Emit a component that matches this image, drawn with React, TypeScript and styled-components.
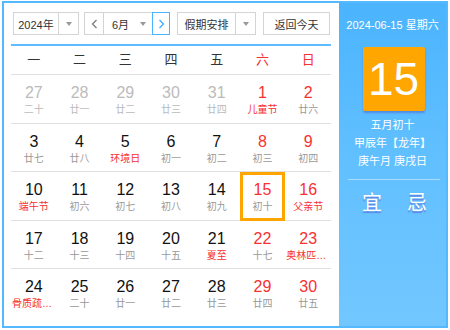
import React from 'react';
import styled, { createGlobalStyle } from 'styled-components';

type Day = {
  num: number;
  lunar: string;
  festival?: boolean;
  other?: boolean;
  selected?: boolean;
};

const WEEKDAYS = ['一', '二', '三', '四', '五', '六', '日'];

const WEEKS: Day[][] = [
  [
    { num: 27, lunar: '二十', other: true },
    { num: 28, lunar: '廿一', other: true },
    { num: 29, lunar: '廿二', other: true },
    { num: 30, lunar: '廿三', other: true },
    { num: 31, lunar: '廿四', other: true },
    { num: 1, lunar: '儿童节', festival: true },
    { num: 2, lunar: '廿六' },
  ],
  [
    { num: 3, lunar: '廿七' },
    { num: 4, lunar: '廿八' },
    { num: 5, lunar: '环境日', festival: true },
    { num: 6, lunar: '初一' },
    { num: 7, lunar: '初二' },
    { num: 8, lunar: '初三' },
    { num: 9, lunar: '初四' },
  ],
  [
    { num: 10, lunar: '端午节', festival: true },
    { num: 11, lunar: '初六' },
    { num: 12, lunar: '初七' },
    { num: 13, lunar: '初八' },
    { num: 14, lunar: '初九' },
    { num: 15, lunar: '初十', selected: true },
    { num: 16, lunar: '父亲节', festival: true },
  ],
  [
    { num: 17, lunar: '十二' },
    { num: 18, lunar: '十三' },
    { num: 19, lunar: '十四' },
    { num: 20, lunar: '十五' },
    { num: 21, lunar: '夏至', festival: true },
    { num: 22, lunar: '十七' },
    { num: 23, lunar: '奥林匹克日', festival: true },
  ],
  [
    { num: 24, lunar: '骨质疏松日', festival: true },
    { num: 25, lunar: '二十' },
    { num: 26, lunar: '廿一' },
    { num: 27, lunar: '廿二' },
    { num: 28, lunar: '廿三' },
    { num: 29, lunar: '廿四' },
    { num: 30, lunar: '廿五' },
  ],
];

const RED = '#f73131';
const LINE = '#d4d4d4';

const GlobalStyle = createGlobalStyle`
  body {
    margin: 0;
    background: #fff;
    font-family: "Liberation Sans", Arial, "Noto Sans CJK SC", sans-serif;
  }
`;

const Widget = styled.div`
  display: flex;
  width: 442px;
  height: 323px;
  margin: 1px 0 0 2px;
  border: 2px solid #55b9ff;
`;

const MainPanel = styled.div`
  width: 335px;
  box-sizing: border-box;
  padding: 9px 8px 0 7px;
  background: #fff;
`;

const Toolbar = styled.div`
  display: flex;
  height: 23px;
  margin: 0 1px 9px 2px;
`;

const SelectBox = styled.div<{ width: number; gap?: number }>`
  display: flex;
  width: ${(p) => p.width}px;
  height: 23px;
  box-sizing: border-box;
  margin-right: ${(p) => p.gap || 0}px;
  border: 1px solid ${LINE};
  background: #fff;
  font-size: 11px;
  color: #333;
`;

const SelectLabel = styled.div<{ align?: string; pad?: number }>`
  flex: 1;
  display: flex;
  align-items: center;
  justify-content: ${(p) => p.align || 'center'};
  padding-left: ${(p) => p.pad || 0}px;
`;

const ArrowCell = styled.div<{ divided?: boolean }>`
  width: 19px;
  display: flex;
  align-items: center;
  justify-content: center;
  border-left: ${(p) => (p.divided ? `1px solid ${LINE}` : 'none')};
`;

const Caret = styled.span`
  width: 0;
  height: 0;
  border-left: 3px solid transparent;
  border-right: 3px solid transparent;
  border-top: 4px solid #999;
`;

const MonthGroup = styled.div`
  display: flex;
  width: 86px;
  height: 23px;
  margin-right: 7px;
  font-size: 11px;
  color: #333;
`;

const NavButton = styled.div<{ active?: boolean; width: number }>`
  width: ${(p) => p.width}px;
  box-sizing: border-box;
  display: flex;
  align-items: center;
  justify-content: center;
  border: 1px solid ${(p) => (p.active ? '#4ab4ff' : LINE)};
  color: ${(p) => (p.active ? '#3aa6ff' : '#777')};
  background: #fff;
`;

const MonthLabel = styled.div`
  flex: 1;
  display: flex;
  align-items: center;
  box-sizing: border-box;
  padding-left: 8px;
  border-top: 1px solid ${LINE};
  border-bottom: 1px solid ${LINE};
  background: #fff;
`;

const MonthText = styled.span`
  flex: 1;
`;

const TodayButton = styled.div`
  width: 67px;
  height: 23px;
  box-sizing: border-box;
  display: flex;
  align-items: center;
  justify-content: center;
  border: 1px solid ${LINE};
  font-size: 11px;
  color: #333;
  background: #fff;
`;

const WeekHeader = styled.div`
  display: grid;
  grid-template-columns: repeat(7, 1fr);
  height: 28px;
  border-top: 2px solid #5cbcff;
  border-bottom: 1px solid #e0e0e0;
`;

const WeekdayName = styled.div<{ weekend: boolean }>`
  font-size: 13px;
  line-height: 28px;
  text-align: center;
  color: ${(p) => (p.weekend ? RED : '#333')};
`;

const WeekRow = styled.div<{ last: boolean }>`
  display: grid;
  grid-template-columns: repeat(7, 1fr);
  height: 47.5px;
  border-bottom: ${(p) => (p.last ? 'none' : '1px solid #e0e0e0')};
`;

const DayCell = styled.div<{ selected?: boolean }>`
  position: relative;
  min-width: 0;
  padding-top: 9px;
  text-align: center;

  &::after {
    content: '';
    display: ${(p) => (p.selected ? 'block' : 'none')};
    position: absolute;
    top: 0;
    left: 0;
    right: 0;
    bottom: -1px;
    border: 3px solid #ffa500;
  }
`;

const DayNum = styled.div<{ color: string }>`
  font-size: 16px;
  line-height: 18px;
  color: ${(p) => p.color};
`;

const LunarText = styled.div<{ color: string }>`
  font-size: 10px;
  line-height: 16px;
  color: ${(p) => p.color};
  white-space: nowrap;
  overflow: hidden;
  text-overflow: ellipsis;
  padding: 0 1px;
`;

const SidePanel = styled.div`
  width: 107px;
  display: flex;
  flex-direction: column;
  align-items: center;
  padding-top: 14px;
  box-sizing: border-box;
  background: linear-gradient(180deg, #4bb4fd 0%, #62c0ff 50%, #72c7ff 100%);
  color: #fff;
`;

const DateLine = styled.div`
  font-size: 11px;
  line-height: 16px;
  white-space: nowrap;
`;

const BigDay = styled.div`
  width: 62px;
  height: 64px;
  margin: 14px 0 5px 2px;
  background: #ffa600;
  border-radius: 2px;
  box-shadow: 0 2px 2px rgba(70, 80, 200, 0.45);
  font-size: 46px;
  line-height: 64px;
  text-align: center;
  color: #fff;
`;

const LunarLine = styled.div`
  font-size: 11px;
  line-height: 18px;
  white-space: nowrap;
`;

const Divider = styled.div`
  width: 92px;
  height: 1px;
  margin: 9px 0 11px 3px;
  background: rgba(255, 255, 255, 0.45);
`;

const AdviceRow = styled.div`
  display: flex;
  gap: 25px;
  padding-left: 4px;
`;

const Advice = styled.span`
  font-size: 20px;
  line-height: 24px;
  text-shadow: 0 2px 1px rgba(90, 80, 210, 0.55);
`;

const Chevron = ({ dir }: { dir: 'left' | 'right' }) => (
  <svg width="7" height="10" viewBox="0 0 7 10">
    <polyline
      points={dir === 'left' ? '5.5,1 1.5,5 5.5,9' : '1.5,1 5.5,5 1.5,9'}
      fill="none"
      stroke="currentColor"
      strokeWidth="1.2"
    />
  </svg>
);

const numColor = (d: Day, col: number) => {
  if (d.other) return '#bbb';
  return col >= 5 ? RED : '#111';
};

const lunarColor = (d: Day) => {
  if (d.other) return '#bbb';
  return d.festival ? RED : '#999';
};

const App: React.FC = () => (
  <>
    <GlobalStyle />
    <Widget>
      <MainPanel>
        <Toolbar>
          <SelectBox width={66} gap={5}>
            <SelectLabel>2024年</SelectLabel>
            <ArrowCell divided>
              <Caret />
            </ArrowCell>
          </SelectBox>
          <MonthGroup>
            <NavButton width={20}>
              <Chevron dir="left" />
            </NavButton>
            <MonthLabel>
              <MonthText>6月</MonthText>
              <ArrowCell>
                <Caret />
              </ArrowCell>
            </MonthLabel>
            <NavButton width={18} active>
              <Chevron dir="right" />
            </NavButton>
          </MonthGroup>
          <SelectBox width={79} gap={7}>
            <SelectLabel>假期安排</SelectLabel>
            <ArrowCell divided>
              <Caret />
            </ArrowCell>
          </SelectBox>
          <TodayButton>返回今天</TodayButton>
        </Toolbar>
        <WeekHeader>
          {WEEKDAYS.map((w, i) => (
            <WeekdayName key={w} weekend={i >= 5}>
              {w}
            </WeekdayName>
          ))}
        </WeekHeader>
        {WEEKS.map((week, r) => (
          <WeekRow key={r} last={r === WEEKS.length - 1}>
            {week.map((d, c) => (
              <DayCell key={`${r}-${c}`} selected={d.selected}>
                <DayNum color={numColor(d, c)}>{d.num}</DayNum>
                <LunarText color={lunarColor(d)}>{d.lunar}</LunarText>
              </DayCell>
            ))}
          </WeekRow>
        ))}
      </MainPanel>
      <SidePanel>
        <DateLine>2024-06-15 星期六</DateLine>
        <BigDay>15</BigDay>
        <LunarLine>五月初十</LunarLine>
        <LunarLine>甲辰年【龙年】</LunarLine>
        <LunarLine>庚午月 庚戌日</LunarLine>
        <Divider />
        <AdviceRow>
          <Advice>宜</Advice>
          <Advice>忌</Advice>
        </AdviceRow>
      </SidePanel>
    </Widget>
  </>
);

export default App;
